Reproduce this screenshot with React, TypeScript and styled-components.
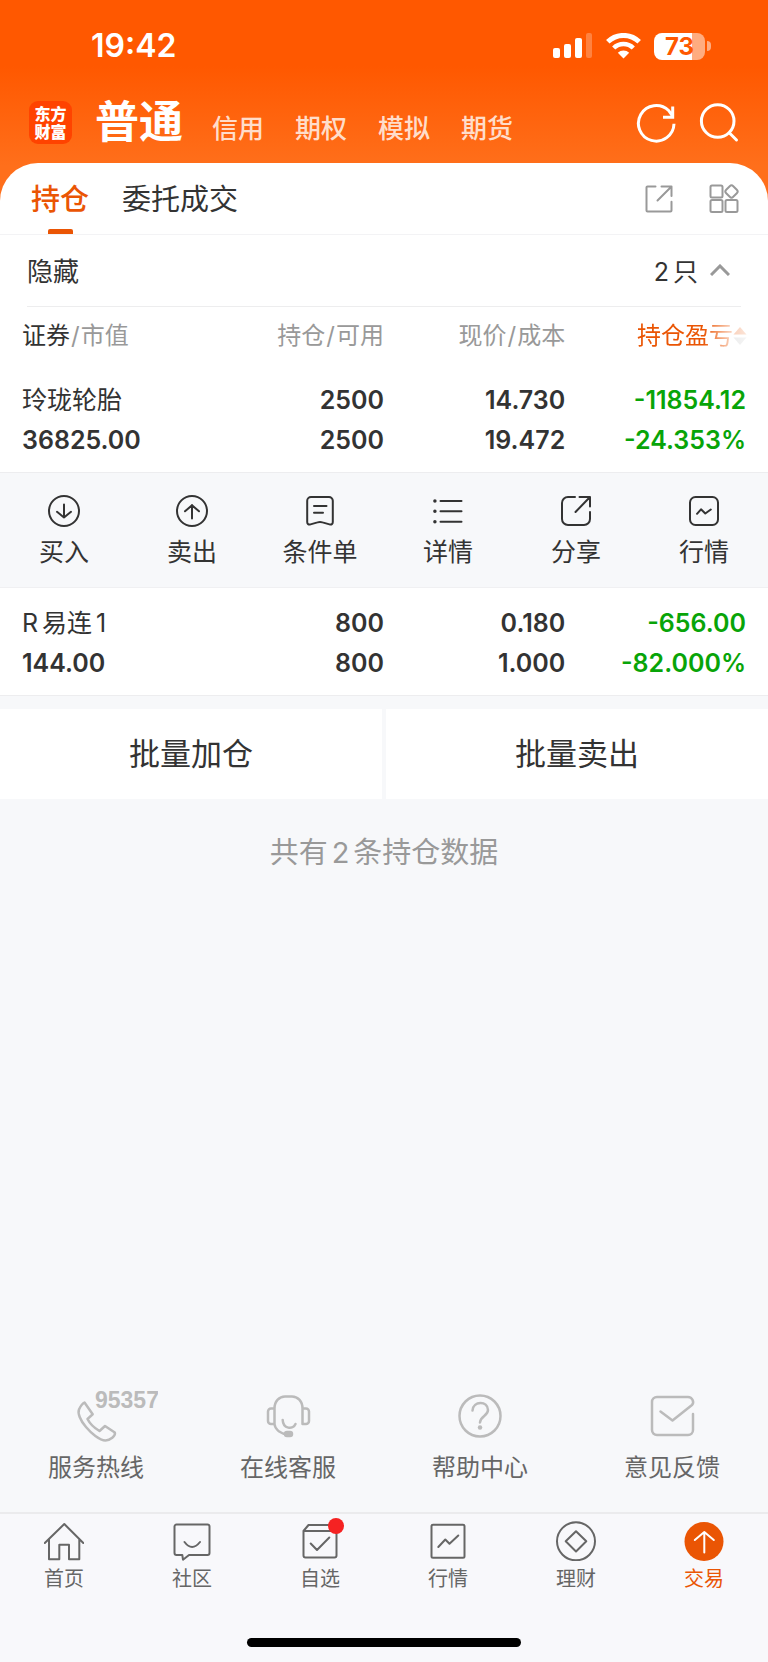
import React from 'react';
import styled, { createGlobalStyle, css } from 'styled-components';

const GlobalStyle = createGlobalStyle`
  *, *::before, *::after { box-sizing: border-box; }
  body {
    margin: 0;
    color: #333;
    background: #f7f8fa;
    font-family: Inter, "Noto Sans CJK SC", sans-serif;
  }
  button {
    margin: 0;
    padding: 0;
    border: 0;
    background: none;
    color: inherit;
    font: inherit;
    cursor: pointer;
  }
  a { color: inherit; text-decoration: none; }
  svg { display: block; flex: none; }
`;

const Page = styled.div`
  min-height: 100vh;
  display: flex;
  flex-direction: column;
  background: #f7f8fa linear-gradient(#ff5800 0, #ff5800 66px, #ff6f1b 166px) no-repeat top / 100% 210px;
`;

/* ---------- status bar ---------- */

const StatusBar = styled.div`
  height: 92px;
  padding: 0 57px 0 91px;
  display: flex;
  align-items: center;
  justify-content: space-between;
  color: #fff;
`;

const Clock = styled.time`
  font-size: 32px;
  line-height: 40px;
  font-weight: 600;
`;

const StatusIcons = styled.div`
  display: flex;
  align-items: center;
  gap: 13px;
`;

const Battery = styled.div`
  display: flex;
  align-items: center;
  gap: 2px;
`;

const BatteryBody = styled.div`
  width: 51px;
  height: 27px;
  border-radius: 8px;
  background: linear-gradient(90deg, #fff 74%, #ffac80 74%);
  color: #ff5800;
  font-size: 24px;
  line-height: 27px;
  font-weight: 700;
  text-align: center;
`;

const BatteryTip = styled.div`
  width: 4px;
  height: 10px;
  border-radius: 0 5px 5px 0;
  background: #ffac80;
`;

/* ---------- header ---------- */

const Header = styled.header`
  height: 71px;
  padding: 0 29px 10px;
  display: flex;
  align-items: center;
  color: #fff;
`;

const Logo = styled.div`
  width: 43px;
  height: 43px;
  border-radius: 9px;
  display: grid;
  place-content: center;
  background: #ff4300;
  font-size: 16px;
  line-height: 18px;
  font-weight: 900;
`;

const Accounts = styled.nav`
  flex: 1;
  margin-left: 23px;
  padding-top: 6px;
  display: flex;
  align-items: baseline;
  gap: 31px;
`;

const Account = styled.button<{ $active?: boolean }>`
  font-size: 26px;
  line-height: 44px;
  font-weight: 500;
  color: rgba(255, 255, 255, 0.8);
  ${(p) =>
    p.$active &&
    css`
      margin-right: -2px;
      font-size: 44px;
      font-weight: 700;
      color: #fff;
    `}
`;

const HeaderTools = styled.div`
  display: flex;
  gap: 23px;
`;

/* ---------- positions sheet ---------- */

const Sheet = styled.section`
  border-radius: 38px 38px 0 0;
  background: #fff;
`;

const TabBar = styled.div`
  height: 72px;
  padding: 0 29px 0 31px;
  display: flex;
  align-items: stretch;
  gap: 33px;
  border-bottom: 1px solid #f3f3f5;
`;

const Tab = styled.button<{ $active?: boolean }>`
  position: relative;
  padding-bottom: 3px;
  font-size: 29px;
  color: #333;
  ${(p) =>
    p.$active &&
    css`
      font-weight: 500;
      color: #ea5504;
      &::after {
        content: '';
        position: absolute;
        left: 50%;
        bottom: 0;
        width: 25px;
        height: 5px;
        margin-left: -12px;
        border-radius: 2px 2px 0 0;
        background: #ea5504;
      }
    `}
`;

const TabTools = styled.div`
  margin-left: auto;
  display: flex;
  align-items: center;
  gap: 36px;
  color: #999;
`;

const Group = styled.div`
  height: 72px;
  margin: 0 27px;
  padding: 0 11px 2px 0;
  display: flex;
  align-items: center;
  justify-content: space-between;
  border-bottom: 1px solid #ededee;
  font-size: 26px;
`;

const GroupToggle = styled.button`
  display: flex;
  align-items: center;
  gap: 12px;
  font-size: 25px;
`;

const Count = styled.span`
  margin-right: 4px;
`;

const Num = styled.span`
  margin: 0 4px;
`;

const Table = styled.table`
  width: 100%;
  table-layout: fixed;
  border-collapse: collapse;
`;

const EdgeCol = styled.col`
  width: 26.4%;
`;

const MidCol = styled.col`
  width: 23.6%;
`;

const HeadCell = styled.th`
  height: 58px;
  padding: 0;
  color: #999;
  font-size: 24px;
  line-height: 32px;
  font-weight: 400;
  text-align: right;
  white-space: nowrap;
  &:first-child { padding-left: 22px; text-align: left; }
  &:last-child { padding-right: 21px; }
  em { font-style: normal; color: #333; }
  i { font-style: normal; padding: 0 1px; }
`;

const SortButton = styled.button`
  display: inline-flex;
  align-items: center;
  color: #ea5504;
  mask-image: linear-gradient(90deg, #000 60%, rgba(0, 0, 0, 0.3) 84%, rgba(0, 0, 0, 0.15));
`;

const Cell = styled.td<{ $down?: boolean }>`
  padding: 15px 0 12px;
  border-bottom: 1px solid #ededef;
  font-size: 25px;
  line-height: 40px;
  font-weight: 600;
  text-align: right;
  white-space: nowrap;
  color: ${(p) => (p.$down ? '#08a408' : '#333')};
  &:first-child { padding-left: 22px; text-align: left; }
  &:last-child { padding-right: 22px; }
`;

const StockName = styled.div`
  font-weight: 400;
`;

const ActionCell = styled.td`
  padding: 0;
  background: #f7f8fa;
  border-bottom: 1px solid #f0f0f2;
`;

const Actions = styled.div`
  height: 114px;
  padding-top: 22px;
  display: grid;
  grid-template-columns: repeat(6, 1fr);
  align-items: start;
`;

const Action = styled.button`
  display: flex;
  flex-direction: column;
  align-items: center;
  gap: 9px;
  font-size: 25px;
  line-height: 32px;
`;

/* ---------- batch buttons and summary ---------- */

const BatchRow = styled.div`
  margin-top: 13px;
  display: grid;
  grid-template-columns: 1fr 1fr;
  gap: 4px;
`;

const BatchButton = styled.button`
  height: 90px;
  padding-bottom: 5px;
  background: #fff;
  font-size: 31px;
`;

const Summary = styled.p`
  flex: 1;
  margin: 0;
  padding-top: 34px;
  color: #999;
  font-size: 29px;
  line-height: 40px;
  text-align: center;
`;

/* ---------- services and bottom navigation ---------- */

const Services = styled.div`
  height: 124px;
  display: grid;
  grid-template-columns: repeat(4, 1fr);
  align-items: start;
`;

const Service = styled.a`
  display: flex;
  flex-direction: column;
  align-items: center;
  gap: 6px;
  color: #666;
  font-size: 24px;
  line-height: 32px;
  svg { color: #bbb; }
`;

const BottomNav = styled.nav`
  height: 126px;
  padding-top: 7px;
  display: grid;
  grid-template-columns: repeat(6, 1fr);
  align-items: start;
  border-top: 2px solid #ebebed;
  background: #f8f8fb;
`;

const NavItem = styled.a<{ $active?: boolean }>`
  display: flex;
  flex-direction: column;
  align-items: center;
  gap: 6px;
  font-size: 20px;
  line-height: 24px;
  color: ${(p) => (p.$active ? '#ea5504' : '#666')};
`;

const NavIcon = styled.span`
  position: relative;
`;

const Badge = styled.span`
  position: absolute;
  top: -3px;
  right: -4px;
  width: 16px;
  height: 16px;
  border-radius: 50%;
  background: #f52222;
`;

const HomeArea = styled.div`
  height: 24px;
  background: #f8f8fb;
`;

const HomeIndicator = styled.div`
  width: 274px;
  height: 9px;
  margin: 0 auto;
  border-radius: 5px;
  background: #000;
`;

/* ---------- icons ---------- */

type IconProps = {
  w: number;
  h?: number;
  sw?: number;
  children: React.ReactNode;
};

const Icon = ({ w, h = w, sw = 2, children }: IconProps) => (
  <svg
    width={w}
    height={h}
    viewBox={`0 0 ${w} ${h}`}
    fill="none"
    stroke="currentColor"
    strokeWidth={sw}
    strokeLinecap="round"
    strokeLinejoin="round"
    aria-hidden="true"
  >
    {children}
  </svg>
);

const actions = [
  {
    label: '买入',
    icon: <><circle cx="16" cy="16" r="15" /><path d="M16 9.5v13M9 16.8l7 5.7 7-5.7" /></>,
  },
  {
    label: '卖出',
    icon: <><circle cx="16" cy="16" r="15" /><path d="M16 23.5v-13.5M9 16.3l7-6 7 6" /></>,
  },
  {
    label: '条件单',
    icon: <path d="M7 2h18a3.8 3.8 0 0 1 3.8 3.8V27c0 2-1.3 3-3.3 2.4L18.5 27.4Q16 26.5 13.5 27.4L6.5 29.4C4.5 30 3.2 29 3.2 27V5.8A3.8 3.8 0 0 1 7 2ZM10 11h12.500M10 17.800h9" />,
  },
  {
    label: '详情',
    icon: (
      <>
        <path d="M8.500 6H29.500M8.500 16.300H29.500M8.500 26.700H29.500" />
        <path d="M2.900 6h.01M2.900 16.300h.01M2.900 26.700h.01" strokeWidth="3.5" />
      </>
    ),
  },
  {
    label: '分享',
    icon: <path d="M15 2H8a6 6 0 0 0-6 6V24a6 6 0 0 0 6 6H24a6 6 0 0 0 6-6V17M19.500 2H30V11.500M29.500 2.500L15.500 17" />,
  },
  {
    label: '行情',
    icon: <><rect x="2" y="2" width="28" height="28" rx="5.500" /><path d="M9 18.800L13 14.300 17.300 18.500 22.800 14.500" /></>,
  },
];

const services = [
  {
    label: '服务热线',
    w: 124,
    icon: (
      <>
        <path d="M50.500 14.500L58.700 26.300 53.500 31Q57 38 65.500 43L71 38 80.800 44.500C82 48 76 52.500 71.500 52.500 65.500 52.500 57 45 52 39 46 32 43.500 25 45 21.500Q47.500 16 50.500 14.500Z" />
        <text x="61" y="20" fontFamily="Liberation Sans, sans-serif" fontSize="23" fontWeight="700" fill="currentColor" stroke="none">95357</text>
      </>
    ),
  },
  {
    label: '在线客服',
    w: 48,
    icon: (
      <>
        <path d="M10.500 36V20.500C10.500 13 15.500 8.500 21 8.500H28C33.500 8.500 38.500 13 38.500 20.500V36M10.500 20.500H7a3 3 0 0 0-3 3V33a3 3 0 0 0 3 3h3.500C11 42 17 45.500 24 46.500M38.500 20.500H42a3 3 0 0 1 3 3V33a3 3 0 0 1-3 3h-3.500M18.700 32C19 41 29 42 31.500 36" />
        <rect x="21" y="44" width="7" height="4" rx="2" fill="currentColor" />
      </>
    ),
  },
  {
    label: '帮助中心',
    w: 48,
    icon: (
      <>
        <circle cx="24" cy="28" r="20.500" />
        <path d="M16.500 22.500C17 12.500 32 12.500 32 22 32 28 24.500 28 24 34.500" />
        <path d="M24 39.500h.01" strokeWidth="4.500" />
      </>
    ),
  },
  {
    label: '意见反馈',
    w: 48,
    icon: <path d="M45 26V42a5 5 0 0 1-5 5H9a5 5 0 0 1-5-5V14a5 5 0 0 1 5-5H40C44.500 9 46.500 14.500 44 17L24.500 32.500 12.500 23.500" />,
  },
];

const navItems = [
  {
    label: '首页',
    icon: <path d="M.8 22L20.300 3 39.300 22M5 18.500V38.300H15.300V23.700H25V38.300H35.300V18.500" />,
  },
  {
    label: '社区',
    icon: <path d="M4.500 3.500H35.500a2 2 0 0 1 2 2V32a2 2 0 0 1-2 2H17L11 38.700 10.300 34H4.500a2 2 0 0 1-2-2V5.500a2 2 0 0 1 2-2ZM12.500 21Q20 31 28 21" />,
  },
  {
    label: '自选',
    badge: true,
    icon: <path d="M8.500 4H35V10M3.500 10L8.500 4M3.500 10H36.500V34.500a2 2 0 0 1-2 2H5.500a2 2 0 0 1-2-2ZM10.700 22.500L17 29 29.300 16.500" />,
  },
  {
    label: '行情',
    icon: <><rect x="3.500" y="3.700" width="33" height="33" rx="1.500" /><path d="M10.300 26L17.300 18.500 21.500 22.700 30.300 14.500" /></>,
  },
  {
    label: '理财',
    icon: <><circle cx="20" cy="20.300" r="19" /><path d="M20 10.300L30.300 20.300 20 30.500 9.700 20.300Z" /></>,
  },
  {
    label: '交易',
    active: true,
    icon: <><circle cx="20" cy="20.500" r="19.500" fill="currentColor" stroke="none" /><path d="M20.300 31.500V11.500M10.800 19L20.300 11 29.800 19" stroke="#fff" /></>,
  },
];

type Position = {
  name: React.ReactNode;
  value: string;
  held: string;
  usable: string;
  price: string;
  cost: string;
  profit: string;
  rate: string;
};

const PositionRow = ({ p }: { p: Position }) => (
  <tr>
    <Cell><StockName>{p.name}</StockName>{p.value}</Cell>
    <Cell>{p.held}<br />{p.usable}</Cell>
    <Cell>{p.price}<br />{p.cost}</Cell>
    <Cell $down>{p.profit}<br />{p.rate}</Cell>
  </tr>
);

const tyre: Position = {
  name: '玲珑轮胎', value: '36825.00', held: '2500', usable: '2500',
  price: '14.730', cost: '19.472', profit: '-11854.12', rate: '-24.353%',
};

const yilian: Position = {
  name: <>R<Num>易连</Num>1</>, value: '144.00', held: '800', usable: '800',
  price: '0.180', cost: '1.000', profit: '-656.00', rate: '-82.000%',
};

export default function App() {
  return (
    <Page>
      <GlobalStyle />
      <StatusBar>
        <Clock>19:42</Clock>
        <StatusIcons>
          <svg width="40" height="26" viewBox="0 0 40 26" fill="#fff" aria-hidden="true">
            <rect x="0" y="15" width="7" height="10" rx="2" />
            <rect x="11" y="11" width="7" height="14" rx="2" />
            <rect x="22" y="5" width="7" height="20" rx="2" />
            <rect x="33" y="0" width="6" height="25" rx="2" opacity=".25" />
          </svg>
          <svg width="35" height="26" viewBox="0 0 35 26" fill="none" stroke="#fff" aria-hidden="true">
            <path d="M1.800 8.800A22.500 22.500 0 0 1 33.200 8.800" strokeWidth="5" />
            <path d="M7.700 15A14 14 0 0 1 27.300 15" strokeWidth="4.500" />
            <path d="M17.500 25.500L11.800 19.800A8.200 8.200 0 0 1 23.200 19.800Z" fill="#fff" stroke="none" />
          </svg>
          <Battery>
            <BatteryBody>73</BatteryBody>
            <BatteryTip />
          </Battery>
        </StatusIcons>
      </StatusBar>

      <Header>
        <Logo><span>东方</span><span>财富</span></Logo>
        <Accounts>
          <Account $active>普通</Account>
          <Account>信用</Account>
          <Account>期权</Account>
          <Account>模拟</Account>
          <Account>期货</Account>
        </Accounts>
        <HeaderTools>
          <button aria-label="刷新">
            <Icon w={40} sw={3}>
              <path d="M38 20.800A17.800 17.800 0 1 1 32.600 7.500L36.500 13M36.700 3.500V14.200H27" strokeLinecap="butt" strokeLinejoin="miter" />
            </Icon>
          </button>
          <button aria-label="搜索">
            <Icon w={40} sw={3}>
              <circle cx="18.700" cy="18" r="16.300" />
              <path d="M30.500 30L37.500 37" />
            </Icon>
          </button>
        </HeaderTools>
      </Header>

      <Sheet>
        <TabBar>
          <Tab $active>持仓</Tab>
          <Tab>委托成交</Tab>
          <TabTools>
            <button aria-label="分享持仓">
              <Icon w={28}>
                <path d="M10.500 1.500H2.500a1 1 0 0 0-1 1V25.500a1 1 0 0 0 1 1H25.500a1 1 0 0 0 1-1V16.800M16.500 1.500H26.500V11M26 2L12.500 15.500" />
              </Icon>
            </button>
            <button aria-label="更多功能">
              <Icon w={30}>
                <rect x="1.500" y="1.500" width="12" height="12" rx="1.500" />
                <rect x="1.500" y="16" width="12" height="12" rx="1.500" />
                <rect x="16.500" y="16" width="12" height="12" rx="1.500" />
                <rect x="17.500" y="2.500" width="10" height="10" rx="2.500" transform="rotate(45 22.500 7.500)" />
              </Icon>
            </button>
          </TabTools>
        </TabBar>

        <Group>
          <button>隐藏</button>
          <GroupToggle>
            <span><Count>2</Count>只</span>
            <svg width="20" height="12" viewBox="0 0 20 12" fill="none" stroke="#999" strokeWidth="3" aria-hidden="true">
              <path d="M1 11L10 2L19 11" />
            </svg>
          </GroupToggle>
        </Group>

        <Table>
          <colgroup><EdgeCol /><MidCol /><MidCol /><EdgeCol /></colgroup>
          <thead>
            <tr>
              <HeadCell><em>证券</em><i>/</i>市值</HeadCell>
              <HeadCell>持仓<i>/</i>可用</HeadCell>
              <HeadCell>现价<i>/</i>成本</HeadCell>
              <HeadCell>
                <SortButton>
                  持仓盈亏
                  <svg width="14" height="20" viewBox="0 0 14 20" aria-hidden="true">
                    <path d="M7 1L13.500 8.500H.5Z" fill="#ea5504" />
                    <path d="M7 19L.5 11.500H13.500Z" fill="#bbb" />
                  </svg>
                </SortButton>
              </HeadCell>
            </tr>
          </thead>
          <tbody>
            <PositionRow p={tyre} />
            <tr>
              <ActionCell colSpan={4}>
                <Actions>
                  {actions.map((a) => (
                    <Action key={a.label}>
                      <Icon w={32}>{a.icon}</Icon>
                      {a.label}
                    </Action>
                  ))}
                </Actions>
              </ActionCell>
            </tr>
            <PositionRow p={yilian} />
          </tbody>
        </Table>
      </Sheet>

      <BatchRow>
        <BatchButton>批量加仓</BatchButton>
        <BatchButton>批量卖出</BatchButton>
      </BatchRow>
      <Summary>共有<Num>2</Num>条持仓数据</Summary>

      <Services>
        {services.map((s) => (
          <Service key={s.label} href="#">
            <Icon w={s.w} h={58} sw={2.5}>{s.icon}</Icon>
            {s.label}
          </Service>
        ))}
      </Services>

      <BottomNav>
        {navItems.map((n) => (
          <NavItem key={n.label} href="#" $active={n.active}>
            <NavIcon>
              <Icon w={40}>{n.icon}</Icon>
              {n.badge && <Badge />}
            </NavIcon>
            {n.label}
          </NavItem>
        ))}
      </BottomNav>
      <HomeArea>
        <HomeIndicator />
      </HomeArea>
    </Page>
  );
}
